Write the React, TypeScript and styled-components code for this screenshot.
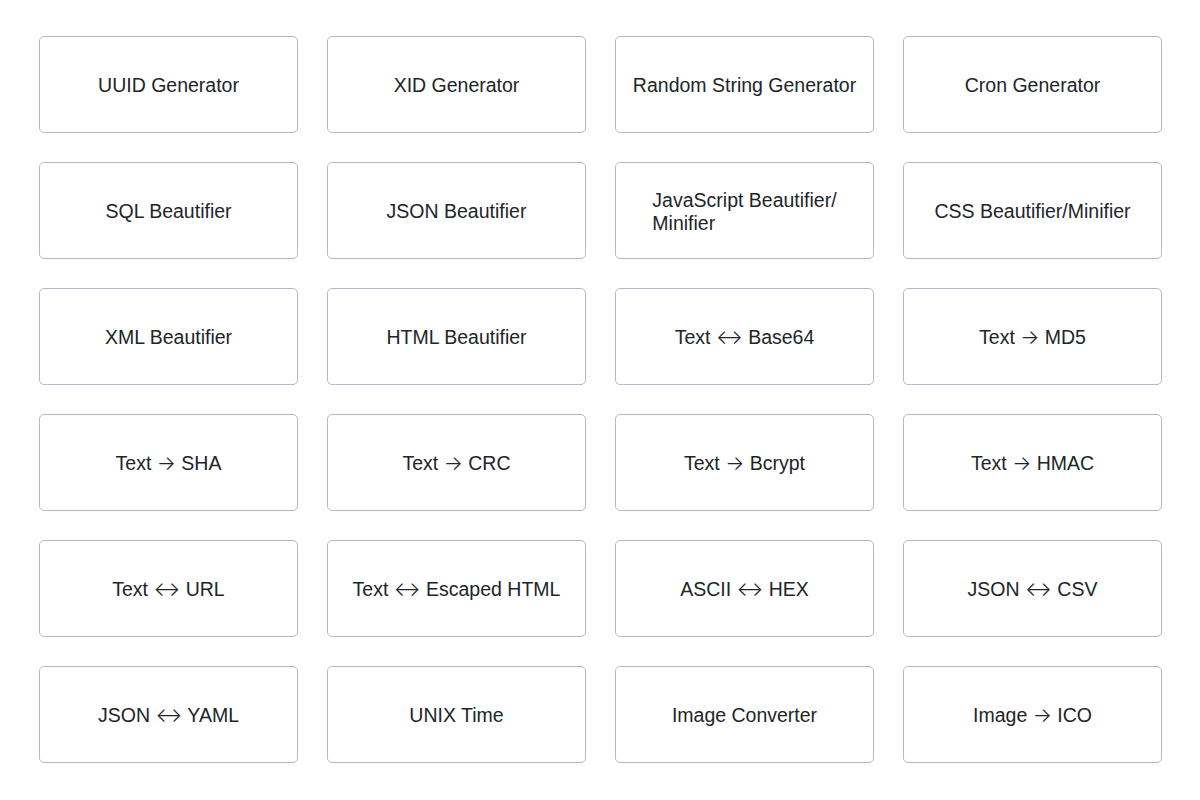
import React from "react";
import styled, { createGlobalStyle } from "styled-components";

const GlobalStyle = createGlobalStyle`
    html, body {
        margin: 0;
        padding: 0;
        background: #ffffff;
    }

    body {
        font-family: "Liberation Sans", Arial, sans-serif;
        color: #212529;
    }
`;

const ToolGrid = styled.div`
    display: grid;
    grid-template-columns: repeat(4, 1fr);
    gap: 29px;
    padding: 36px 38px 38px 39px;
`;

const ToolCard = styled.a`
    display: flex;
    align-items: center;
    justify-content: center;
    box-sizing: border-box;
    height: 97px;
    padding: 0 16px;
    border: 1px solid #b9bac1;
    border-radius: 5px;
    background: #ffffff;
    color: #212529;
    text-decoration: none;
    cursor: pointer;

    &:hover {
        background: #f8f9fa;
    }
`;

const ToolName = styled.span`
    font-size: 19.5px;
    line-height: 23px;
    text-align: left;
    white-space: pre-line;
    margin-top: 2px;
`;

/* Liberation draws the arrows tiny, Inter has the thin chevron ones */
const Arrow = styled.span`
    font-family: Inter, "DejaVu Sans", sans-serif;
    font-size: 20px;
    font-weight: 300;
`;

const tools = [
    "UUID Generator",
    "XID Generator",
    "Random String Generator",
    "Cron Generator",
    "SQL Beautifier",
    "JSON Beautifier",
    "JavaScript Beautifier/\nMinifier",
    "CSS Beautifier/Minifier",
    "XML Beautifier",
    "HTML Beautifier",
    "Text ↔ Base64",
    "Text → MD5",
    "Text → SHA",
    "Text → CRC",
    "Text → Bcrypt",
    "Text → HMAC",
    "Text ↔ URL",
    "Text ↔ Escaped HTML",
    "ASCII ↔ HEX",
    "JSON ↔ CSV",
    "JSON ↔ YAML",
    "UNIX Time",
    "Image Converter",
    "Image → ICO",
];

const renderName = (name: string) =>
    name.split(/([↔→])/).map((part, i) =>
        part === "↔" || part === "→" ? <Arrow key={i}>{part}</Arrow> : part
    );

const App: React.FC = () => {
    return (
        <>
            <GlobalStyle />
            <ToolGrid>
                {tools.map((name) => (
                    <ToolCard key={name}>
                        <ToolName>{renderName(name)}</ToolName>
                    </ToolCard>
                ))}
            </ToolGrid>
        </>
    );
};

export default App;
